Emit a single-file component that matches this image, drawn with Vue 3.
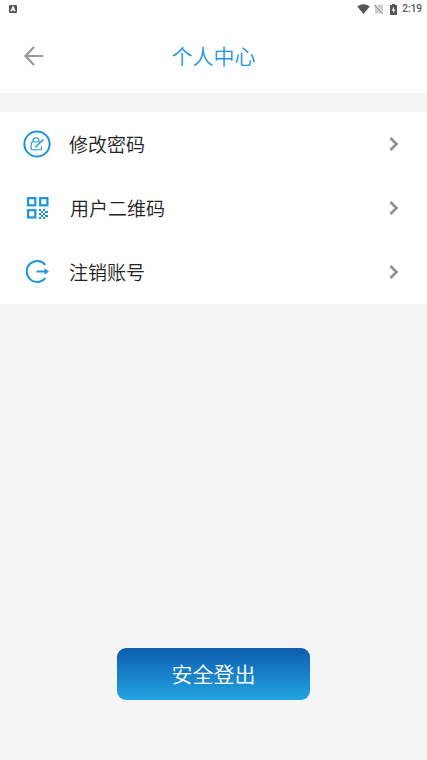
<script setup>
const rows = [
  { id: 'password', label: '修改密码' },
  { id: 'qrcode', label: '用户二维码' },
  { id: 'cancel', label: '注销账号' },
]
</script>

<template>
  <div class="screen">
    <div class="status">
      <svg class="badge" viewBox="0 0 8 8" aria-hidden="true">
        <rect width="8" height="8" rx="1" fill="#555" />
        <path d="M2 6.300 L4 1.800 L6 6.300 M2.900 4.900 H5.100" fill="none" stroke="#fff" stroke-width="1.300" />
      </svg>
      <div class="indicators">
        <svg class="wifi" viewBox="0 0 13 10" aria-hidden="true">
          <path d="M0.300 2.500 Q6.500 -2 12.700 2.500 L6.500 10 Z" fill="#555" />
        </svg>
        <svg class="sim" viewBox="0 0 10 10" aria-hidden="true">
          <path d="M3.500 0.500 H9 V9.500 H1 V3 Z" fill="#cfcfcf" />
          <path d="M1.200 0.500 L10 9.300" stroke="#fff" stroke-width="1" />
          <path d="M0.500 1 L9 9.800" stroke="#999" stroke-width="1.100" />
        </svg>
        <svg class="battery" viewBox="0 0 7 11" aria-hidden="true">
          <path d="M2 0 H5 V1 H6.300 Q7 1 7 1.700 V10.300 Q7 11 6.300 11 H0.700 Q0 11 0 10.300 V1.700 Q0 1 0.700 1 H2 Z" fill="#555" />
          <path d="M4 2.500 L1.700 6.500 H3.200 V9.500 L5.400 5.500 H4 Z" fill="#fff" />
        </svg>
        <span class="time">2:19</span>
      </div>
    </div>

    <header class="header">
      <button class="back" type="button" aria-label="返回">
        <svg viewBox="0 0 20 20" aria-hidden="true">
          <path d="M10 1 L1.500 10 L10 19 M1.500 10 H19" fill="none" stroke="#999" stroke-width="2.200" />
        </svg>
      </button>
      <h1>个人中心</h1>
    </header>

    <nav class="list">
      <a v-for="row in rows" :key="row.id" class="row" :class="row.id" href="#">
        <svg v-if="row.id === 'password'" class="icon" viewBox="0 0 28 28" aria-hidden="true">
          <g fill="none" stroke="#1e96da">
            <circle cx="14" cy="14" r="12.600" stroke-width="2" />
            <path d="M18 12 H9.200 Q8.200 12 8.200 13 V18.800 Q8.200 19.800 9.200 19.800 H17.500 Q18.500 19.800 18.500 18.800 V16.500" stroke-width="1.100" />
            <path d="M10 12 V10.500 Q10 7.800 13 7.800 Q15.800 7.800 15.800 10.500 V12" stroke-width="1.100" />
            <path d="M12.700 17.800 L13.200 16.300 L20.500 9.500" stroke-width="1.400" />
          </g>
        </svg>
        <svg v-else-if="row.id === 'qrcode'" class="icon" viewBox="0 0 28 28" aria-hidden="true">
          <g fill="none" stroke="#1e96da" stroke-width="2.200">
            <rect x="5.100" y="4.100" width="7.200" height="7.200" />
            <rect x="17.200" y="4.100" width="7.200" height="7.200" />
            <rect x="5.100" y="16.200" width="7.200" height="7.200" />
          </g>
          <path
            d="M16 15h2v2h-2zM20 15h2v2h-2zM18 17h2v2h-2zM22 17h3v2h-3zM16 19h2v2h-2zM20 19h2v2h-2zM18 21h2v2h-2zM22 21h3v2h-3zM16 23h2v2h-2zM20 23h2v2h-2z"
            fill="#1e96da"
          />
        </svg>
        <svg v-else class="icon" viewBox="0 0 28 28" aria-hidden="true">
          <path d="M22.300 6.800 A10.500 10.500 0 1 0 22.300 20.200" fill="none" stroke="#1e96da" stroke-width="2" />
          <path d="M13.500 13.500 H23" stroke="#1e96da" stroke-width="2" />
          <path d="M21.500 10.300 L26 13.500 L21.500 16.700 Z" fill="#1e96da" />
        </svg>
        <span class="label">{{ row.label }}</span>
        <svg class="chevron" viewBox="0 0 10 16" aria-hidden="true">
          <path d="M1.500 2 L7.500 8 L1.500 14" fill="none" stroke="#919191" stroke-width="2.600" />
        </svg>
      </a>
    </nav>

    <footer class="footer">
      <button class="logout" type="button">安全登出</button>
    </footer>
  </div>
</template>

<style>
body {
  background: #f4f4f4;
}
</style>

<style scoped>
.screen {
  display: flex;
  flex-direction: column;
  min-height: 100vh;
  box-sizing: border-box;
  background: #f4f4f4;
  font-family: Roboto, "Noto Sans CJK SC", sans-serif;
}

.status {
  display: flex;
  align-items: center;
  justify-content: space-between;
  height: 18px;
  padding: 0 5px 0 9px;
  background: #fefefe;
}

.badge {
  width: 8px;
  height: 8px;
}

.indicators {
  display: flex;
  align-items: center;
}

.wifi {
  width: 13px;
  height: 10px;
  margin-right: 4px;
}

.sim {
  width: 10px;
  height: 10px;
  margin-right: 6px;
}

.battery {
  width: 7px;
  height: 11px;
  margin-right: 5px;
}

.time {
  color: #555;
  font-size: 10px;
  font-weight: 500;
  line-height: 18px;
}

.header {
  display: grid;
  grid-template-columns: 68px 1fr 68px;
  align-items: center;
  height: 75px;
  background: #fefefe;
}

.back {
  display: flex;
  width: 44px;
  height: 44px;
  margin-left: 12px;
  padding: 12px;
  border: 0;
  box-sizing: border-box;
  background: none;
}

.back svg {
  width: 20px;
  height: 20px;
}

h1 {
  margin: 0;
  padding-top: 2px;
  color: #1e96da;
  font-size: 21px;
  font-weight: 350;
  line-height: 32px;
  text-align: center;
}

.list {
  margin-top: 19px;
  background: #fefefe;
}

.row {
  display: flex;
  align-items: center;
  height: 64px;
  padding: 0 28px 0 23px;
  color: #222;
  text-decoration: none;
}

.icon {
  width: 28px;
  height: 28px;
  margin-right: 18px;
}

.qrcode .icon {
  margin-right: 19px;
}

.label {
  flex: 1;
  padding-top: 3px;
  font-size: 19px;
  font-weight: 350;
  line-height: 28px;
}

.chevron {
  width: 10px;
  height: 16px;
}

.footer {
  display: flex;
  justify-content: center;
  margin-top: auto;
  padding-bottom: 60px;
}

.logout {
  width: 45%;
  height: 52px;
  padding: 0 0 2px;
  border: 0;
  border-radius: 9px;
  background: linear-gradient(#0e5cad, #22a3e2);
  color: #fff;
  font: inherit;
  font-size: 21px;
  font-weight: 350;
}
</style>
